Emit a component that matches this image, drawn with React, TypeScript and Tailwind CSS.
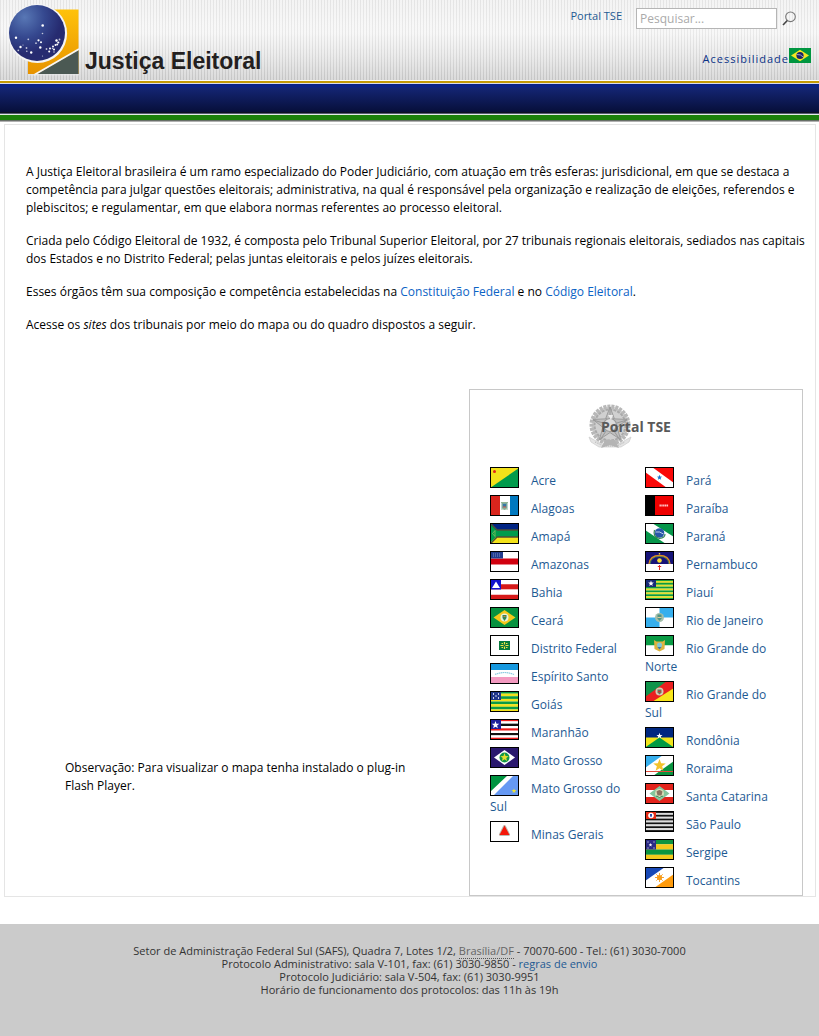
import type { ReactNode } from "react";

function points(cx: number, cy: number, r: number) {
  return Array.from({ length: 10 }, (_, i) => {
    const d = i % 2 ? r * 0.42 : r;
    const a = (Math.PI * i) / 5 - Math.PI / 2;
    return `${(cx + d * Math.cos(a)).toFixed(2)},${(cy + d * Math.sin(a)).toFixed(2)}`;
  }).join(" ");
}

function Star({ x, y, r, fill }: { x: number; y: number; r: number; fill: string }) {
  return <polygon points={points(x, y, r)} fill={fill} />;
}

function Stripes({ colors }: { colors: string[] }) {
  const h = 21 / colors.length;
  return (
    <>
      {colors.map((c, i) => (
        <rect key={i} y={i * h} width="29" height={h + 0.1} fill={c} />
      ))}
    </>
  );
}

type State = { name: string; flag: ReactNode };

const left: State[] = [
  {
    name: "Acre",
    flag: (
      <>
        <rect width="29" height="21" fill="#f3e21a" />
        <path d="M0 21 29 1V21Z" fill="#009b4c" />
        <circle cx="4.500" cy="4.500" r="1.500" fill="#e2231a" />
      </>
    ),
  },
  {
    name: "Alagoas",
    flag: (
      <>
        <rect width="29" height="21" fill="#fff" />
        <rect width="10" height="21" fill="#da251d" />
        <rect x="20" width="9" height="21" fill="#0078bf" />
        <path d="M11.500 8h6v5l-3 2-3-2Z" fill="#7aa79b" />
        <path d="M13 9h3v3h-3Z" fill="#3677a8" />
        <path d="M11 14h7M11 7.500h7" stroke="#92b493" />
        <path d="M13 12h3" stroke="#d75d45" />
      </>
    ),
  },
  {
    name: "Amapá",
    flag: (
      <>
        <rect width="29" height="7" fill="#002483" />
        <rect y="7" width="29" height="7" fill="#009b4c" />
        <rect y="14" width="29" height="7" fill="#f3e21a" />
        <path d="M0 0 7 7H29M0 21 7 14H29" fill="none" stroke="#524e35" strokeWidth="1.500" />
        <path d="M0 1 7 8v5L0 20Z" fill="#009b4c" />
        <path d="M5 7.500v6L2.500 10.500Z" fill="none" stroke="#9bc45b" strokeWidth=".7" />
      </>
    ),
  },
  {
    name: "Amazonas",
    flag: (
      <>
        <rect width="29" height="21" fill="#fff" />
        <rect y="7.500" width="29" height="6" fill="#d1000f" />
        <rect width="13" height="7.500" fill="#213c8e" />
        <path d="M3 3h8M3 5h7" stroke="#7b8ec4" strokeWidth="1" strokeDasharray="1 1" />
      </>
    ),
  },
  {
    name: "Bahia",
    flag: (
      <>
        <Stripes colors={["#fff", "#d61a1a", "#fff", "#d61a1a"]} />
        <rect width="11" height="10.500" fill="#1212ce" />
        <path d="M6 2.500 10 9H2Z" fill="#fff" />
      </>
    ),
  },
  {
    name: "Ceará",
    flag: (
      <>
        <rect width="29" height="21" fill="#07923f" />
        <path d="M14.500 3 25.500 10.500 14.500 18 3.500 10.500Z" fill="#f4c81b" />
        <circle cx="14.500" cy="10.500" r="4" fill="#e8f1df" />
        <path d="M12.500 8h4v3l-2 3-2-3Z" fill="#348854" />
        <path d="M13.500 9.500h2" stroke="#dc7d42" />
      </>
    ),
  },
  {
    name: "Distrito Federal",
    flag: (
      <>
        <rect width="29" height="21" fill="#fff" />
        <rect x="9" y="6" width="11" height="9" fill="#087b3e" />
        <path d="M14.500 7v7M10.500 10.500h8" stroke="#f3e545" strokeWidth="1.200" />
        <path d="M11.500 8.500h6M11.500 12.500h6" stroke="#f3e545" strokeDasharray="1.500 3" />
        <path d="M13.500 9.500h2v2h-2Z" fill="#176b39" />
      </>
    ),
  },
  {
    name: "Espírito Santo",
    flag: (
      <>
        <Stripes colors={["#1698df", "#fff", "#f39ac0"]} />
        <path d="M5 11.500q9.500-4 19 0" fill="none" stroke="#8dcce1" strokeWidth="1.200" strokeDasharray="1.500 .5" />
      </>
    ),
  },
  {
    name: "Goiás",
    flag: (
      <>
        <Stripes colors={["#0c9b45", "#f3e21a", "#0c9b45", "#f3e21a", "#0c9b45", "#f3e21a", "#0c9b45", "#f3e21a"]} />
        <rect width="11" height="9" fill="#20368b" />
        <path d="M3 3h1m4 0h1M3 7h1m4 0h1M5.500 5h1" stroke="#fff" strokeWidth="1.300" />
      </>
    ),
  },
  {
    name: "Maranhão",
    flag: (
      <>
        <Stripes colors={["#ed1818", "#fff", "#111", "#fff", "#ed1818", "#fff", "#111", "#fff", "#ed1818"]} />
        <rect width="11" height="10" fill="#20209b" />
        <Star x={5.5} y={6} r={4} fill="#fff" />
      </>
    ),
  },
  {
    name: "Mato Grosso",
    flag: (
      <>
        <rect width="29" height="21" fill="#2a186e" />
        <path d="M14.500 3 25 10.500 14.500 18 4 10.500Z" fill="#fff" />
        <circle cx="14.500" cy="10.500" r="5" fill="#109747" />
        <Star x={14.5} y={10.5} r={4.4} fill="#e6dd2c" />
      </>
    ),
  },
  {
    name: "Mato Grosso do Sul",
    flag: (
      <>
        <rect width="29" height="21" fill="#6699f3" />
        <path d="M0 0H24L3 21H0Z" fill="#fff" />
        <path d="M0 0H18L0 17Z" fill="#009440" />
        <Star x={24} y={16} r={2.6} fill="#f1e533" />
      </>
    ),
  },
  {
    name: "Minas Gerais",
    flag: (
      <>
        <rect width="29" height="21" fill="#fff" />
        <path d="M14.500 5.500 18.500 13.500H10.500Z" fill="#bcbcb3" stroke="#bcbcb3" strokeWidth="3" strokeLinejoin="round" />
        <path d="M14.500 4.500 19.500 14H9.500Z" fill="#f4180a" />
      </>
    ),
  },
];

const right: State[] = [
  {
    name: "Pará",
    flag: (
      <>
        <rect width="29" height="21" fill="#fa0808" />
        <path d="M0 0H7L29 16V21H22L0 5Z" fill="#fff" />
        <Star x={14.5} y={10.5} r={2.8} fill="#1b75d1" />
      </>
    ),
  },
  {
    name: "Paraíba",
    flag: (
      <>
        <rect width="29" height="21" fill="#ef0000" />
        <rect width="10" height="21" fill="#000" />
        <path d="M14.500 10.500h9" stroke="#ffc4c4" strokeWidth="1.800" strokeDasharray="1.400 .4" />
      </>
    ),
  },
  {
    name: "Paraná",
    flag: (
      <>
        <rect width="29" height="21" fill="#06964a" />
        <path d="M0 0H7L29 14V21H21L0 7Z" fill="#fff" />
        <circle cx="14.500" cy="10" r="4.800" fill="#2857a8" />
        <path d="M10.500 9q4-1 8 2" fill="none" stroke="#fff" strokeWidth=".7" />
        <path d="M9.500 7q-2 7 5 8.500Q20 15 20 11" fill="none" stroke="#378456" strokeWidth="1.200" />
      </>
    ),
  },
  {
    name: "Pernambuco",
    flag: (
      <>
        <rect width="29" height="14" fill="#161378" />
        <rect y="13" width="29" height="8" fill="#fff" />
        <path d="M4 13q1-8.500 10.500-8.500T25 13" fill="none" stroke="#df8b22" strokeWidth="1.300" />
        <path d="M5 13q1-7.500 9.500-7.500T24 13" fill="none" stroke="#5fab48" strokeWidth=".7" />
        <circle cx="14.500" cy="9.500" r="2.300" fill="#f8dd31" />
        <circle cx="14.500" cy="2.700" r=".8" fill="#f8dd31" />
        <path d="M14.500 14v5M12.800 15.500h3.400" stroke="#e62c26" />
      </>
    ),
  },
  {
    name: "Piauí",
    flag: (
      <>
        <Stripes colors={["#0c9b3d", "#e3df2d", "#0c9b3d", "#e3df2d", "#0c9b3d", "#e3df2d", "#0c9b3d", "#e3df2d", "#0c9b3d", "#e3df2d", "#0c9b3d"]} />
        <rect width="11" height="8" fill="#182b78" />
        <Star x={6} y={4.5} r={3} fill="#fff" />
      </>
    ),
  },
  {
    name: "Rio de Janeiro",
    flag: (
      <>
        <rect width="29" height="21" fill="#fff" />
        <path d="M14.500 0H29V10.500H0V21H14.500Z" fill="#fff" />
        <path d="M14.500 10.500V0H29V10.500ZM0 10.500H14.500V21H0Z" fill="#36afed" />
        <circle cx="14.500" cy="10.500" r="4.500" fill="#a4bfab" />
        <path d="M12.500 7.500h4v4l-2 2.500-2-2.500Z" fill="#519483" />
        <path d="M12.500 10.500h4" stroke="#dac899" />
      </>
    ),
  },
  {
    name: "Rio Grande do Norte",
    flag: (
      <>
        <rect width="29" height="10.500" fill="#0a9b45" />
        <rect y="10.500" width="29" height="10.500" fill="#fff" />
        <path d="M9 5 11.500 6.500h6L20 5l-.5 9-5 2.500-5-2.500Z" fill="#ddb33f" />
        <circle cx="14.500" cy="10" r="2.500" fill="#83c8d4" />
        <path d="M12.500 12h4l-2 2.500Z" fill="#3479b4" />
      </>
    ),
  },
  {
    name: "Rio Grande do Sul",
    flag: (
      <>
        <rect width="29" height="21" fill="#ea2020" />
        <path d="M0 0H22L0 16Z" fill="#10934a" />
        <path d="M29 7V21H7Z" fill="#f8e51b" />
        <circle cx="14.500" cy="10.500" r="4" fill="#d8cab5" />
        <path d="M12.500 8.500h4v3l-2 2-2-2Z" fill="#6c745a" />
        <path d="M13 10.500h3" stroke="#ca3831" />
      </>
    ),
  },
  {
    name: "Rondônia",
    flag: (
      <>
        <rect width="29" height="11" fill="#00277f" />
        <rect y="10.500" width="29" height="10.500" fill="#f2e51b" />
        <path d="M14.500 10.500 29 20.500H0Z" fill="#009a43" />
        <Star x={14.5} y={9} r={3.2} fill="#fff" />
      </>
    ),
  },
  {
    name: "Roraima",
    flag: (
      <>
        <rect width="29" height="21" fill="#fff" />
        <path d="M0 0H18L0 13Z" fill="#36afed" />
        <path d="M29 6V21H8Z" fill="#099440" />
        <path d="M0 16.500h29" stroke="#e34b3a" />
        <Star x={14.5} y={10.5} r={6.6} fill="#f2c32c" />
      </>
    ),
  },
  {
    name: "Santa Catarina",
    flag: (
      <>
        <Stripes colors={["#e3231b", "#fff", "#e3231b"]} />
        <path d="M14.500 3 24.500 10.500 14.500 18 4.500 10.500Z" fill="#84c69d" />
        <circle cx="14.500" cy="10.500" r="4.500" fill="#d8dfb7" />
        <path d="M11.500 8.500q3-3 6 0l-1 4h-4Z" fill="#8b7560" />
        <path d="M11 13q3.500 3 7 0" fill="none" stroke="#2f8555" />
      </>
    ),
  },
  {
    name: "São Paulo",
    flag: (
      <>
        <Stripes colors={["#111", "#ddd", "#111", "#ddd", "#111", "#ddd", "#111", "#ddd", "#111", "#ddd", "#111"]} />
        <rect width="11" height="8" fill="#e62c16" />
        <circle cx="6" cy="4.500" r="2.800" fill="#fff" />
        <path d="M5 3h2v2L6 6.500 5 5Z" fill="#314eae" />
      </>
    ),
  },
  {
    name: "Sergipe",
    flag: (
      <>
        <Stripes colors={["#0c9440", "#f4c91c", "#0c9440", "#f4c91c"]} />
        <rect width="11" height="10.500" fill="#2b2b86" />
        <Star x={5.5} y={6} r={2} fill="#fff" />
        <path d="M2.500 3h1m5 0h1M2.500 9h1m5 0h1" stroke="#fff" />
      </>
    ),
  },
  {
    name: "Tocantins",
    flag: (
      <>
        <rect width="29" height="21" fill="#fff" />
        <path d="M0 0H20L0 14Z" fill="#1849b7" />
        <path d="M29 7V21H9Z" fill="#ff9b0c" />
        <path d="M14.500 6v9M10 10.500h9M11.300 7.300l6.400 6.400M17.700 7.300l-6.400 6.400" stroke="#f5a431" />
        <circle cx="14.500" cy="10.500" r="2.600" fill="#f79c1c" />
      </>
    ),
  },
];

function StateList({ states }: { states: State[] }) {
  return (
    <ul className="flex w-[135px] flex-col gap-[5px]">
      {states.map((s) => (
        <li key={s.name}>
          <a href="#" className="text-[#1e5a93]">
            <svg viewBox="0 0 29 21" className="mr-3 inline-block h-[21px] w-[29px] align-[-3px]" aria-hidden="true">
              {s.flag}
              <rect x=".5" y=".5" width="28" height="20" fill="none" stroke="#000" />
            </svg>
            {s.name}
          </a>
        </li>
      ))}
    </ul>
  );
}

const sky = [
  [42.7, 25.5, 1.3], [42.5, 33.5, 0.8], [16, 37.7, 1.2], [28.3, 39.3, 0.9],
  [20.5, 47, 1.2], [18.3, 50.3, 0.9], [26.5, 48, 0.9], [31.2, 52.5, 1.2],
  [26.8, 51.3, 0.8], [38.5, 40.3, 1.1], [36, 43.2, 0.9], [41, 42.3, 1],
  [40.3, 47.5, 1.2], [46.5, 49, 0.9], [49.2, 51.5, 1], [50, 48.5, 1],
  [53, 46.5, 1], [54, 49.5, 1], [54, 52, 0.8], [55.5, 45, 1], [56.5, 40.5, 1.2],
  [58.3, 42.5, 1.1], [57.2, 44.5, 1], [59.5, 39.5, 0.9], [42.5, 56, 0.6],
  [23, 45, 0.6], [52.5, 48.5, 0.8],
];

function Logo() {
  return (
    <svg viewBox="0 0 80 80" className="h-20 w-20" aria-hidden="true">
      <defs>
        <linearGradient id="gold" x1="0" y1="0" x2="0" y2="1">
          <stop offset="0" stopColor="#ffc20a" />
          <stop offset="1" stopColor="#e79300" />
        </linearGradient>
        <radialGradient id="globe" cx=".28" cy=".22" r=".65">
          <stop offset="0" stopColor="#5877b5" />
          <stop offset=".55" stopColor="#35488f" />
          <stop offset="1" stopColor="#262b70" />
        </radialGradient>
      </defs>
      <rect x="28" y="9.500" width="50.500" height="64.500" fill="url(#gold)" />
      <path d="M37 74 78.500 50V74Z" fill="#4b5953" />
      <path d="M34 75 79 49" stroke="#f6f6f6" strokeWidth="1.800" />
      <path d="M28 74.800H79" stroke="#e8e8e8" />
      <circle cx="37.500" cy="33.500" r="29.600" fill="#f4f4f4" />
      <circle cx="37" cy="33" r="28" fill="url(#globe)" />
      {sky.map(([x, y, r], i) => (
        <circle key={i} cx={x} cy={y} r={r} fill="#fff" fillOpacity={r < 1 ? 0.7 : 1} />
      ))}
    </svg>
  );
}

function Emblem() {
  return (
    <svg viewBox="0 0 44 48" className="h-12 w-11" fill="none" aria-hidden="true">
      <circle cx="22" cy="22" r="18.500" fill="#d0d0d0" stroke="#b8b8b8" strokeWidth="4" strokeDasharray="3 1" />
      <circle cx="22" cy="22" r="15.500" stroke="#aaa" strokeWidth="2" strokeDasharray="3 1" />
      <polygon points={points(22, 22, 18)} fill="#bfbfbf" stroke="#9c9c9c" />
      <path d="M22 4V22L39 17M22 22 5 17M22 22 12 37M22 22 32 37M22 22 26 15M22 22 30 24M22 22V29M22 22 14 24M22 22 18 15" stroke="#999" />
      <circle cx="22" cy="22" r="6.500" fill="#dcdcdc" stroke="#9b9b9b" strokeWidth="1.200" />
      <path d="M20 12h5l-2 5Z" fill="#eee" />
      <path d="M1 34 8 38 15 42H29L36 38 43 34 41 39 33 44H11L3 39Z" fill="#e4e4e4" stroke="#cbcbcb" strokeWidth=".7" />
      <path d="M17 37h10l4 8-9-3-9 3Z" fill="#b4b4b4" />
      <path d="M7 39 15 43H29L37 39" stroke="#b4b4b4" strokeDasharray="1 1" />
    </svg>
  );
}

function Header() {
  return (
    <header>
      <div className="flex h-20 justify-between bg-[repeating-linear-gradient(90deg,rgba(0,0,0,0.05)_0px,rgba(0,0,0,0.05)_1px,rgba(255,255,255,0.25)_1px,rgba(255,255,255,0.25)_3px),linear-gradient(#f0f0f0,#f6f6f6_40%,#e6e6e6_68%,#cfcfcf)]">
        <a href="#" className="flex items-end gap-[5px]">
          <Logo />
          <span className="pb-1 font-['Liberation_Sans',sans-serif] text-[23px] leading-[30px] font-bold text-[#231f20]">
            Justiça Eleitoral
          </span>
        </a>
        <div className="flex flex-col items-end justify-between pt-2 pr-2 pb-[14px]">
          <form className="flex items-start pr-[14px]" onSubmit={(e) => e.preventDefault()}>
            <a href="#" className="mr-[14px] text-[11px] leading-4 font-medium text-[#1e5a93]">
              Portal TSE
            </a>
            <input
              type="search"
              aria-label="Pesquisar"
              placeholder="Pesquisar..."
              className="h-[21px] w-[141px] border border-[#b5b5b5] bg-white px-[3px] text-[12px] text-gray-700 outline-none placeholder:text-[#aaa]"
            />
            <button type="submit" aria-label="Buscar" className="mt-[3px] ml-[5px]">
              <svg viewBox="0 0 15 15" className="h-[15px] w-[15px]" fill="none">
                <circle cx="8.500" cy="5.800" r="4.800" stroke="#777" strokeWidth="1.100" />
                <path d="M5.300 9.500 1 14" stroke="#444" strokeWidth="1.600" />
              </svg>
            </button>
          </form>
          <a href="#" className="flex items-start text-[11px] leading-[15px] font-medium tracking-[1px] text-[#0b3287]">
            <span className="pt-[3px]">Acessibilidade</span>
            <svg viewBox="0 0 22 15" className="h-[15px] w-[22px]" aria-hidden="true">
              <rect width="22" height="15" fill="#009640" />
              <path d="M11 1.700 20 7.500 11 13.300 2 7.500Z" fill="#f4e622" />
              <circle cx="11" cy="7.500" r="3.600" fill="#1d2268" />
              <path d="M7.700 6.500q4-.5 6.500 2.500" fill="none" stroke="#b9c5d6" strokeWidth=".8" />
            </svg>
          </a>
        </div>
      </div>
      <div className="h-px bg-white" />
      <div className="h-[2px] bg-[#c59a06]" />
      <div className="h-px bg-[#d9dcec]" />
      <nav aria-label="Principal" className="h-[29px] bg-[linear-gradient(#0b2286,#0b2286_10%,#142573_14%,#070f3a_96%,#111)]" />
      <div className="h-[2px] border-t border-[#555a75] bg-[#e5ece5]" />
      <div className="h-[5px] bg-[#1b800a]" />
      <div className="h-[2px] border-b border-[#b0b0b0] bg-[#666e66]" />
    </header>
  );
}

export default function App() {
  return (
    <div className="flex min-h-screen flex-col bg-white font-['Open_Sans','Noto_Sans',sans-serif] text-[12px] leading-[18px] text-black">
      <Header />
      <main className="mt-[2px] mr-[3px] ml-1 border border-[#e5e5e5] pt-[38px]">
        <div className="flex flex-col gap-[15px] pr-px pl-[21px]">
          <p>
            A Justiça Eleitoral brasileira é um ramo especializado do Poder Judiciário, com atuação em três esferas:
            jurisdicional, em que se destaca a competência para julgar questões eleitorais; administrativa, na qual é
            responsável pela organização e realização de eleições, referendos e plebiscitos; e regulamentar, em que
            elabora normas referentes ao processo eleitoral.
          </p>
          <p>
            Criada pelo Código Eleitoral de 1932, é composta pelo Tribunal Superior Eleitoral, por 27 tribunais
            regionais eleitorais, sediados nas capitais dos Estados e no Distrito Federal; pelas juntas eleitorais e
            pelos juízes eleitorais.
          </p>
          <p>
            Esses órgãos têm sua composição e competência estabelecidas na{" "}
            <a href="#" className="text-[#0b63c5]">Constituição Federal</a> e no{" "}
            <a href="#" className="text-[#0b63c5]">Código Eleitoral</a>.
          </p>
          <p>
            Acesse os <em>sites</em> dos tribunais por meio do mapa ou do quadro dispostos a seguir.
          </p>
        </div>
        <div className="mt-[55px] flex items-stretch justify-between pr-3">
          <p className="flex-1 self-end pr-12 pb-[101px] pl-[60px]">
            Observação: Para visualizar o mapa tenha instalado o plug-in Flash Player.
          </p>
          <section className="w-[334px] border border-[#c8c8c8] pt-[13px] pb-[5px]">
            <h2 className="grid h-12 place-items-center text-[14px] font-bold text-[#595959]">
              <span className="col-start-1 row-start-1 mr-[52px]">
                <Emblem />
              </span>
              <a href="#" className="col-start-1 row-start-1">Portal TSE</a>
            </h2>
            <div className="mt-4 flex gap-5 pl-5">
              <StateList states={left} />
              <StateList states={right} />
            </div>
          </section>
        </div>
      </main>
      <footer className="mt-[27px] flex-1 bg-[#cbcbcb] pt-5 pb-10 text-center text-[11px] leading-[13px] text-[#333]">
        <address className="not-italic">
          Setor de Administração Federal Sul (SAFS), Quadra 7, Lotes 1/2,{" "}
          <abbr title="Distrito Federal" className="border-b border-dotted border-[#555] text-[#666] no-underline">
            Brasília/DF
          </abbr>{" "}
          - 70070-600 - Tel.: (61) 3030-7000
        </address>
        <p>
          Protocolo Administrativo: sala V-101, fax: (61) 3030-9850 -{" "}
          <a href="#" className="text-[#1e5a93]">regras de envio</a>
        </p>
        <p>Protocolo Judiciário: sala V-504, fax: (61) 3030-9951</p>
        <p>Horário de funcionamento dos protocolos: das 11h às 19h</p>
      </footer>
    </div>
  );
}
